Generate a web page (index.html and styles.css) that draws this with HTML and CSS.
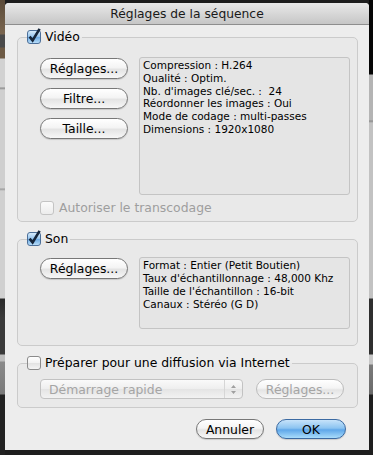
FILE: index.html
```html
<!DOCTYPE html>
<html lang="fr">
<head>
    <meta charset="UTF-8">
    <title>Réglages de la séquence</title>
    <link rel="stylesheet" href="styles.css">
</head>
<body>
    <!-- fond de l'application derrière la feuille -->
    <div class="desk">
        <div class="edge edge-left"></div>

        <!-- fenêtre de dialogue -->
        <div class="dialog">
            <div class="titlebar">Réglages de la séquence</div>

            <div class="content">
                <!-- Vidéo -->
                <fieldset class="group group-video">
                    <legend><span class="check checked"><svg class="tick" width="16" height="16" viewBox="0 0 16 16"><path d="M2.6 6.6 L5.6 10.4 L12.6 -1.2" fill="none" stroke="#16263b" stroke-width="2.6"/></svg></span>Vidéo</legend>
                    <div class="row">
                        <div class="buttons">
                            <span class="btn">Réglages...</span>
                            <span class="btn">Filtre...</span>
                            <span class="btn">Taille...</span>
                        </div>
                        <div class="info info-video">
                            <p>Compression : H.264</p>
                            <p>Qualité : Optim.</p>
                            <p>Nb. d'images clé/sec. :&nbsp; 24</p>
                            <p>Réordonner les images : Oui</p>
                            <p>Mode de codage : multi-passes</p>
                            <p>Dimensions : 1920x1080</p>
                        </div>
                    </div>
                    <div class="option disabled">
                        <span class="check"></span>Autoriser le transcodage
                    </div>
                </fieldset>

                <!-- Son -->
                <fieldset class="group group-audio">
                    <legend><span class="check checked"><svg class="tick" width="16" height="16" viewBox="0 0 16 16"><path d="M2.6 6.6 L5.6 10.4 L12.6 -1.2" fill="none" stroke="#16263b" stroke-width="2.6"/></svg></span>Son</legend>
                    <div class="row">
                        <div class="buttons">
                            <span class="btn">Réglages...</span>
                        </div>
                        <div class="info info-audio">
                            <p>Format : Entier (Petit Boutien)</p>
                            <p>Taux d'échantillonnage : 48,000 Khz</p>
                            <p>Taille de l'échantillon : 16-bit</p>
                            <p>Canaux : Stéréo (G D)</p>
                        </div>
                    </div>
                </fieldset>

                <!-- Internet -->
                <fieldset class="group group-web">
                    <legend><span class="check"></span>Préparer pour une diffusion via Internet</legend>
                    <div class="row row-web">
                        <span class="popup">Démarrage rapide<span class="stepper">
                            <svg width="7" height="11" viewBox="0 0 7 11"><path d="M3.5 1 L6 4 H1 Z M3.5 10 L6 7 H1 Z" fill="#a0a0a0"/></svg>
                        </span></span>
                        <span class="btn disabled">Réglages...</span>
                    </div>
                </fieldset>

                <div class="actions">
                    <span class="btn btn-cancel">Annuler</span>
                    <span class="btn btn-ok">OK</span>
                </div>
            </div>
        </div>

        <div class="edge edge-right"></div>
    </div>
</body>
</html>
```

FILE: styles.css
```css
/* remise à zéro */
*{
    margin: 0;
    padding: 0;
    box-sizing: border-box;
}

body{
    background-color: #1e1e1e;
    font-family: "DejaVu Sans", "Liberation Sans", sans-serif;
    font-size: 12px;
    color: #000;
}

.desk{
    display: flex;
    width: 373px;
    height: 455px;
    overflow: hidden;
}

/* bandes de l'application derrière */
.edge{
    height: 455px;
}

.edge-left{
    width: 5px;
    background: linear-gradient(to bottom,
        #5a4a38 0, #7a6650 34px, #4a4a4a 35px, #4a4a4a 47px,
        #6d5a45 48px, #6d5a45 58px, #d2d2d2 59px, #d2d2d2 87px,
        #8a8a8a 88px, #cfcfcf 90px, #cfcfcf 188px, #9a9a9a 189px,
        #d0d0d0 191px, #d0d0d0 298px, #2a2a2a 299px, #3a3a3a 318px,
        #3a3a3a 354px, #bdbdbd 355px, #bdbdbd 361px, #8a8a8a 362px,
        #7a7a7a 394px, #222 395px, #222 455px);
}

.edge-right{
    width: 4px;
    background: linear-gradient(to bottom,
        #050505 0, #050505 74px, #b4b4b4 75px, #b4b4b4 120px,
        #8a8a8a 121px, #c2c2c2 123px, #c2c2c2 298px, #2e2e2e 299px,
        #2e2e2e 354px, #c8c8c8 355px, #c8c8c8 364px, #7a7a7a 365px,
        #6a6a6a 394px, #1e1e1e 395px, #1e1e1e 455px);
}

/* la feuille */
.dialog{
    width: 364px;
    height: 447px;
    margin-top: 3px;
    background-color: #ededed;
    border-radius: 4px 4px 0 0;
    overflow: hidden;
}

.titlebar{
    height: 22px;
    line-height: 22px;
    text-align: center;
    font-size: 12.3px;
    color: #1a1a1a;
    background: linear-gradient(to bottom, #e9e9e9, #c6c6c6);
    border-bottom: 1px solid #8e8e8e;
}

.content{
    padding: 4px 11px 0 12px;
    display: flex;
    flex-direction: column;
}

/* cadres */
.group{
    border: 1px solid #cbcbcb;
    border-radius: 5px;
    background-color: #e9e9e9;
    padding: 0 7px 0 22px;
}

.group legend{
    margin-left: -13px;
    padding: 0 2px 0 0;
    display: flex;
    align-items: center;
    font-size: 12.4px;
    height: 16px;
    line-height: 16px;
}

.group + .group{
    margin-top: 9px;
}

.group-video{
    padding-top: 12px;
    padding-bottom: 6px;
}

.group-audio{
    padding-top: 10px;
    padding-bottom: 16px;
}

.group-web{
    padding-top: 8px;
    padding-bottom: 8px;
}

.row{
    display: flex;
    gap: 11px;
}

.buttons{
    display: flex;
    flex-direction: column;
    gap: 9px;
    margin-top: 1px;
}

/* cases à cocher */
.check{
    display: inline-block;
    flex: none;
    width: 14px;
    height: 14px;
    margin-right: 4px;
    border: 1px solid #8b8b8b;
    border-radius: 3px;
    background: linear-gradient(to bottom, #ffffff, #f2f2f2 50%, #e2e2e2 51%, #f4f4f4);
    position: relative;
}

.check.checked{
    border-color: #4c6f99;
    background: linear-gradient(to bottom, #d6ebfb, #93c3ee 50%, #6aa8e2 51%, #b6dcf8);
}

/* coche qui dépasse du cadre */
.tick{
    position: absolute;
    left: -1px;
    top: -1px;
    overflow: visible;
}

/* boutons aqua */
.btn{
    display: inline-flex;
    align-items: center;
    justify-content: center;
    height: 21px;
    width: 88px;
    font-size: 12.4px;
    border: 1px solid #777;
    border-radius: 11px;
    background: linear-gradient(to bottom, #ffffff 0, #f4f4f4 45%, #e4e4e4 55%, #f7f7f7 100%);
    box-shadow: 0 1px 1px rgba(0,0,0,0.15);
}

.btn.disabled{
    color: #a5a5a5;
    border-color: #bcbcbc;
    box-shadow: none;
    width: 88px;
    height: 20px;
}

/* zones d'info */
.info{
    width: 211px;
    border: 1px solid #c4c4c4;
    border-radius: 3px;
    background-color: #e5e5e5;
    padding: 1px 3px;
    font-size: 10.5px;
    line-height: 12.8px;
}

.info-video{
    height: 138px;
}

.info-audio{
    height: 72px;
    line-height: 13px;
}

.option{
    display: flex;
    align-items: center;
    margin-top: 5px;
    font-size: 12.4px;
}

.option .check{
    margin-right: 5px;
}

.option.disabled{
    color: #9e9e9e;
}

.option.disabled .check{
    border-color: #c4c4c4;
    background: linear-gradient(to bottom, #fbfbfb, #ececec);
}

/* menu local désactivé */
.row-web{
    gap: 13px;
}

.popup{
    width: 203px;
    height: 20px;
    display: flex;
    align-items: center;
    padding-left: 8px;
    font-size: 12.4px;
    color: #a5a5a5;
    border: 1px solid #c2c2c2;
    border-radius: 4px;
    background: linear-gradient(to bottom, #fafafa, #eeeeee 50%, #e4e4e4 51%, #f2f2f2);
}

.stepper{
    margin-left: auto;
    width: 18px;
    height: 18px;
    display: flex;
    align-items: center;
    justify-content: center;
    border-left: 1px solid #d6d6d6;
}

/* boutons du bas */
.actions{
    display: flex;
    justify-content: flex-end;
    gap: 12px;
    margin-top: 11px;
    padding-right: 12px;
}

.btn-cancel{
    width: 68px;
    height: 20px;
}

.btn-ok{
    width: 70px;
    height: 20px;
    border-color: #3b6aa2;
    background: linear-gradient(to bottom, #c7e3fa 0, #8cc4f1 45%, #5fa7e9 55%, #a9dcfb 100%);
}
```
